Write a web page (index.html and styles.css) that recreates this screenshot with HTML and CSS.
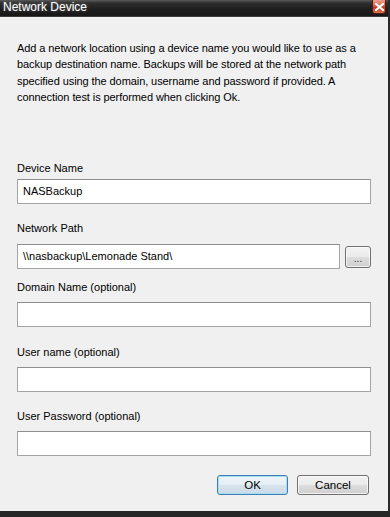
FILE: index.html
```html
<!DOCTYPE html>
<html>
<head>
<meta charset="utf-8">
<link rel="stylesheet" href="styles.css">
</head>
<body>
<div class="window">
  <div class="titlebar">
    <span class="title">Network Device</span>
    <span class="close" aria-label="Close">
      <svg width="9" height="8" viewBox="0 0 9 8"><path d="M1 1 L8 7 M8 1 L1 7" stroke="#fff" stroke-width="2.2" stroke-linecap="square"/></svg>
    </span>
  </div>
  <div class="content">
    <p class="intro">Add a network location using a device name you would like to use as a backup destination name. Backups will be stored at the network path specified using the domain, username and password if provided. A connection test is performed when clicking Ok.</p>

    <div class="field f-device">
      <label class="lbl">Device Name</label>
      <div class="box">NASBackup</div>
    </div>

    <div class="field f-path">
      <label class="lbl">Network Path</label>
      <div class="row">
        <div class="box grow">\\nasbackup\Lemonade Stand\</div>
        <button class="btn browse">...</button>
      </div>
    </div>

    <div class="field f-domain">
      <label class="lbl">Domain Name (optional)</label>
      <div class="box"></div>
    </div>

    <div class="field f-user">
      <label class="lbl">User name (optional)</label>
      <div class="box"></div>
    </div>

    <div class="field f-pass">
      <label class="lbl">User Password (optional)</label>
      <div class="box"></div>
    </div>

    <div class="actions">
      <button class="btn action default">OK</button>
      <button class="btn action">Cancel</button>
    </div>
  </div>
</div>
</body>
</html>
```

FILE: styles.css
```css
html, body {
  margin: 0;
  padding: 0;
  background: #f0f0f0;
}
body {
  width: 390px;
  height: 517px;
  overflow: hidden;
  font-family: "Liberation Sans", Arial, sans-serif;
  font-size: 11px;
  color: #000;
}
.window {
  width: 390px;
  height: 517px;
  box-sizing: border-box;
  display: flex;
  flex-direction: column;
  background: #f0f0f0;
  border-right: 2px solid #2a2a2a;
  border-bottom: 6px solid #262626;
}
.titlebar {
  height: 17px;
  flex: none;
  display: flex;
  align-items: flex-start;
  justify-content: space-between;
  background: linear-gradient(#5a5a5a 0px, #2e2e2e 3px, #1e1e1e 9px, #161616 17px);
  box-shadow: inset 0 -1px 0 #3a3a3a;
}
.title {
  color: #fff;
  font-family: "Liberation Sans", Arial, sans-serif;
  font-size: 12px;
  line-height: 15px;
  padding-left: 3px;
  text-shadow: 0 0 3px rgba(255,255,255,0.35);
}
.close {
  width: 14px;
  height: 14px;
  margin-right: 2px;
  box-sizing: border-box;
  display: flex;
  align-items: center;
  justify-content: center;
  border: 1px solid #5a1a10;
  border-top: none;
  border-radius: 0 0 3px 3px;
  background: linear-gradient(#f0a08a, #d6654b 45%, #c0391f 55%, #d4714f);
}
.content {
  flex: 1;
  display: flex;
  flex-direction: column;
  padding: 23px 17px 0 17px;
}
.intro {
  margin: 0;
  line-height: 16.3px;
  width: 356px;
  font-size: 11px;
  letter-spacing: -0.08px;
}
.lbl {
  display: block;
  line-height: 16px;
  margin-bottom: 7px;
  font-size: 11px;
}
.box {
  height: 25px;
  box-sizing: border-box;
  border: 1px solid #a5a5a5;
  border-top-color: #8e8f8f;
  background: #fff;
  padding: 0 5px;
  line-height: 22px;
  width: 354px;
  font-size: 11px;
}
.row {
  display: flex;
  align-items: center;
  gap: 5px;
  width: 354px;
}
.box.grow {
  width: auto;
  flex: 1;
}
.f-device { margin-top: 55px; }
.f-device .lbl { margin-bottom: 3px; }
.f-path { margin-top: 16px; }
.f-path .lbl { margin-bottom: 8px; }
.f-domain { margin-top: 10px; }
.f-user { margin-top: 17px; }
.f-pass { margin-top: 16px; }

.btn {
  font-family: "Liberation Sans", Arial, sans-serif;
  font-size: 11.5px;
  color: #000;
  box-sizing: border-box;
  border: 1px solid #707070;
  border-radius: 3px;
  background: linear-gradient(#f2f2f2 0%, #ebebeb 48%, #dddddd 52%, #cfcfcf 100%);
  box-shadow: inset 0 0 0 1px rgba(255,255,255,0.7);
  padding: 0;
  margin: 0;
}
.browse {
  width: 26px;
  height: 22px;
  flex: none;
  font-size: 10px;
  line-height: 18px;
  padding-top: 3px;
  color: #333;
}
.actions {
  margin-top: 19px;
  display: flex;
  justify-content: flex-end;
  gap: 9px;
  padding-right: 2px;
}
.action {
  width: 72px;
  height: 20px;
  line-height: 18px;
}
.action.default {
  width: 71px;
  border-color: #3c7fb1;
  box-shadow: inset 0 0 0 1px #a9dcf5;
  background: linear-gradient(#eef5fa 0%, #e4eef5 48%, #d6e3ec 52%, #cbdbe6 100%);
}
```
